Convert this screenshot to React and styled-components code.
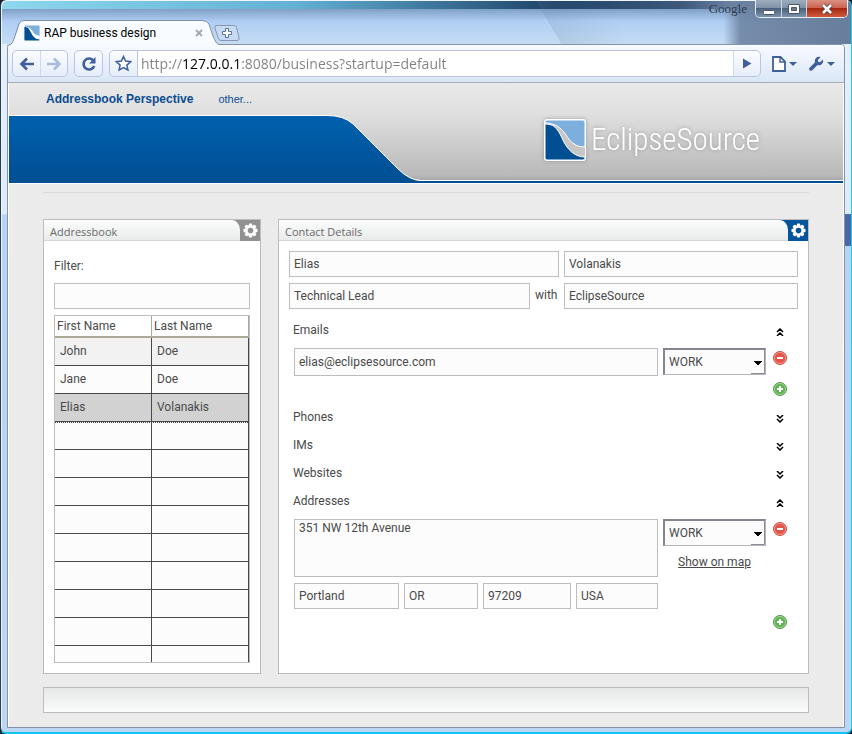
import React from "react";
import styled, { createGlobalStyle, css } from "styled-components";

const uiFont = '"Open Sans", "Noto Sans", sans-serif';
const formFont = 'Roboto, "Noto Sans", sans-serif';
const ink = "#4a4a4a";
const line = "#bdbdbd";
const navy = "#3f5f9c";

const GlobalStyle = createGlobalStyle`
  *, *::before, *::after { box-sizing: border-box; }
  body { margin: 0; background: #16202c; }
  button { padding: 0; border: 0; background: none; cursor: pointer; }
  svg { display: block; }
`;

/* ---------- window frame ---------- */

const WindowFrame = styled.div`
  display: flex;
  flex-direction: column;
  min-height: 100vh;
  padding: 0 6px 4px 6px;
  border-left: 1px solid #2a3c50;
  border-right: 1px solid #12d0f5;
  border-bottom: 2px solid #12c4ee;
  border-radius: 6px;
  box-shadow: inset 1px 1px 0 #eef6fc;
  background:
    linear-gradient(#0a1526, #0a1526) top / 100% 1px no-repeat,
    linear-gradient(60deg, transparent 64%, #5f7f9a2a 64%, transparent 72%) top / 100% 44px no-repeat,
    linear-gradient(90deg, transparent 85%, #6b81a0dd 87%, #667d9b 100%) top / 100% 44px no-repeat,
    linear-gradient(90deg, #8ed8ee, #62b0d3 35%, #1f4268 65%, #3d587a 80%, #6c83a2 86%) top / 100% 9px no-repeat,
    linear-gradient(#7fa0c4, #b0cdf4 35%, #c5dcf3) 0 9px / 100% 35px no-repeat,
    linear-gradient(#4d66a6, #4d66a6) right 214px / 6px 32px no-repeat,
    linear-gradient(#e8f2fc 0, #dceafa 214px, #b5d3f5 215px, #bcd7f4 100%);
`;

const TitleBar = styled.div`
  display: flex;
  align-items: flex-start;
  height: 44px;
`;

const TabStrip = styled.div`
  display: flex;
  align-items: flex-start;
  flex: 1;
  min-width: 0;
`;

const Tab = styled.div`
  position: relative;
  z-index: 1;
  display: flex;
  align-items: center;
  width: 212px;
  height: 26px;
  margin-top: 20px;
  padding: 0 14px 0 17px;
  color: #000;
  font: 12px/18px ${formFont};
`;

const TabShape = styled.svg`
  position: absolute;
  inset: 0;
  z-index: -1;
`;

const TabTitle = styled.span`
  flex: 1;
  margin-left: 4px;
  white-space: nowrap;
`;

const TabClose = styled.button`
  display: grid;
  place-items: center;
  width: 12px;
  height: 12px;
`;

const NewTab = styled.button`
  margin: 25px 0 0 -5px;
`;

const Brand = styled.span`
  margin-right: 8px;
  color: #2b3c50;
  font: 13px/18px "Liberation Serif", serif;
`;

const Controls = styled.div`
  display: flex;
  margin-right: -3px;
  border: 1px solid #e6eef7;
  border-top: 0;
  border-radius: 0 0 5px 5px;
  overflow: hidden;
`;

const ControlButton = styled.button`
  display: grid;
  place-items: center;
  width: ${({ $close }) => ($close ? 41 : 25)}px;
  height: 17px;
  border-left: ${({ $first }) => ($first ? 0 : "1px solid #c9d5e2")};
  background: ${({ $close }) =>
    $close
      ? "linear-gradient(#d99282, #cc6451 45%, #a72710 50%, #d05a3c)"
      : "linear-gradient(#9dadbf, #7f92a8 45%, #4c617b 50%, #7d93ad)"};
`;

const Chrome = styled.div`
  display: flex;
  flex-direction: column;
  flex: 1;
  border: 1px solid #8593a8;
  border-radius: 4px 4px 0 0;
`;

/* ---------- browser toolbar ---------- */

const Toolbar = styled.div`
  display: flex;
  align-items: center;
  gap: 6px;
  height: 38px;
  padding: 0 9px 0 4px;
  border-bottom: 1px solid #a9adb5;
  border-radius: 3px 3px 0 0;
  background: linear-gradient(#f8fbff, #dae6f6);
`;

const ToolGroup = styled.div`
  display: flex;
  height: 27px;
  border: 1px solid #b9c6df;
  border-radius: 5px;
  background: linear-gradient(#fafcff, #e6eefa);
  overflow: hidden;
`;

const ToolButton = styled.button`
  display: grid;
  place-items: center;
  width: 27px;
  height: 25px;
  color: ${navy};
  ${({ $divided }) => $divided && css`border-left: 1px solid #d0daeb;`}
`;

const AddressBar = styled(ToolGroup).attrs({ as: "form" })`
  flex: 1;
  min-width: 0;
`;

const AddressBox = styled.div`
  display: flex;
  flex: 1;
  min-width: 0;
  padding-left: 3px;
  border-left: 1px solid #b9c6df;
  background: #fff;
`;

/* The host part is tinted black, scheme and path stay grey. */
const Address = styled.input`
  flex: 1;
  min-width: 0;
  height: 25px;
  padding: 0;
  border: 0;
  outline: 0;
  background: linear-gradient(90deg, #808080 42px, #000 42px, #000 99px, #808080 99px);
  background-clip: text;
  -webkit-background-clip: text;
  color: transparent;
  caret-color: #000;
  font: 14px/24px ${uiFont};
`;

const MenuButton = styled.button`
  display: flex;
  align-items: center;
  gap: 3px;
  margin-left: 5px;
  color: ${navy};
`;

/* ---------- page ---------- */

const Page = styled.div`
  display: flex;
  flex-direction: column;
  flex: 1;
  padding-bottom: 14px;
  border: solid #fff;
  border-width: 0 1px;
  background: #ebebeb;
`;

const Header = styled.header`
  background:
    linear-gradient(transparent 97px, #fff 97px, #fff 98px, #004f92 98px, #004f92 100px, #fff 100px),
    linear-gradient(#e9e9e9, #e0e0e0 30px, #b9b9b9 92px, #a9a9a9 97px);
`;

const Nav = styled.nav`
  display: flex;
  align-items: center;
  gap: 25px;
  height: 32px;
  padding-left: 37px;
`;

const NavLink = styled.a`
  color: #0a4c90;
  font: ${({ $active }) => ($active ? "bold 12px" : "11px")}/16px "Liberation Sans", sans-serif;
  text-decoration: none;
`;

const Banner = styled.div`
  display: flex;
  align-items: flex-start;
  justify-content: space-between;
  height: 69px;
  padding-right: 83px;
`;

const Logo = styled.div`
  display: flex;
  align-items: center;
  gap: 5px;
  margin-top: 4px;
  filter: drop-shadow(0 0 2px #7779);
`;

const LogoText = styled.span`
  color: #fff;
  font: 300 31px/42px "Roboto Condensed", "Open Sans Condensed", Roboto, sans-serif;
`;

const Rule = styled.hr`
  align-self: stretch;
  height: 1px;
  margin: 8px 34px 26px;
  border: 0;
  background: #d9d9d9;
`;

const Workspace = styled.main`
  display: grid;
  grid-template-columns: 218px minmax(0, 1fr);
  gap: 17px;
  flex: 1;
  padding: 0 34px;
`;

const Panel = styled.section`
  display: flex;
  flex-direction: column;
  border: 1px solid ${line};
  background: #fff;
  color: ${ink};
  font: 12px/16px ${formFont};
`;

const accents = {
  gray: "#919191",
  blue: "#00549c",
};

const PanelHeader = styled.div`
  display: flex;
  justify-content: space-between;
  height: 21px;
  background: ${({ $accent }) => accents[$accent]};
  color: ${({ $accent }) => accents[$accent]};
`;

const PanelTitle = styled.h2`
  flex: 1;
  margin: 0;
  padding: 4px 6px 0;
  border-bottom: 1px solid #d6d6d6;
  border-top-right-radius: 8px 10px;
  background: linear-gradient(#fcfdfd, #e9eaea);
  color: #6a6a6a;
  font: 11px/16px ${uiFont};
`;

const PanelTool = styled.button`
  display: grid;
  place-items: center;
  width: 20px;
  height: 21px;
  color: inherit;
`;

const PanelBody = styled.div`
  display: flex;
  flex-direction: column;
  flex: 1;
  padding: 10px;
`;

const field = css`
  display: block;
  width: 100%;
  min-width: 0;
  margin: 0;
  padding: 0 4px;
  border: 1px solid ${line};
  border-radius: 0;
  outline: 0;
  background: #fcfcfc;
  color: ${ink};
  font: inherit;
`;

const Field = styled.input`
  ${field}
  height: ${({ $tall }) => ($tall ? 28 : 26)}px;
`;

const Area = styled.textarea`
  ${field}
  height: 58px;
  resize: none;
`;

const FilterLabel = styled.label`
  display: grid;
  gap: 9px;
  margin: 7px 0 6px;
`;

const TableBox = styled.div`
  flex: 1 1 0;
  min-height: 0;
  border: 1px solid ${line};
  background: #fcfcfc;
  overflow: hidden;
  contain: size;
`;

const Contacts = styled.table`
  width: 100%;
  border-spacing: 0;
  table-layout: fixed;
`;

const HeadCell = styled.th`
  height: 22px;
  padding: 0 2px;
  border: solid #aca899;
  border-width: 0 1px 2px 0;
  background: #fff;
  font-weight: 400;
  text-align: left;
`;

const Cell = styled.td`
  height: 28px;
  padding: 0 5px 2px;
  border: solid ${ink};
  border-width: 0 1px 1px 0;
`;

const Row = styled.tr`
  background: ${({ $tone }) => $tone || "#fcfcfc"};
  ${({ $selected }) => $selected && css`outline: 1px dotted #444;`}
`;

const Identity = styled.div`
  display: grid;
  grid-template-columns: 270fr 234fr;
  gap: 6px 5px;
  margin-bottom: 7px;
`;

const Employment = styled.div`
  display: flex;
  gap: 5px;
`;

const With = styled.span`
  flex: none;
  width: 24px;
  padding-top: 4px;
`;

const SectionHead = styled.div`
  display: flex;
  align-items: center;
  justify-content: space-between;
  height: 28px;
  padding: 0 14px 0 4px;
`;

const SectionTitle = styled.h3`
  margin: 0;
  font: inherit;
`;

const Toggle = styled.button`
  padding-top: 4px;
`;

const Entry = styled.div`
  display: grid;
  grid-template-columns: minmax(0, 1fr) 103px 16px;
  column-gap: 5px;
  align-items: start;
  margin-top: 4px;
  padding: 0 11px 0 5px;
`;

const EntryColumn = styled.div`
  display: grid;
  gap: 6px;
`;

const CityRow = styled.div`
  display: grid;
  grid-template-columns: 105fr 74fr 88fr 82fr;
  gap: 5px;
`;

const RoundButton = styled.button`
  margin: 3px 0 0 2px;
`;

const AddRow = styled.div`
  display: flex;
  justify-content: flex-end;
  padding: 6px 11px 7px 0;
`;

const SelectBox = styled.div`
  display: grid;
  grid-template-columns: 1fr 14px;
  align-items: center;
  height: 27px;
  border: 1px solid #b4b4bb;
  border-top: 2px solid #85858f;
  border-left: 2px solid #85858f;
  background: #fcfcfc;

  svg { grid-area: 1 / 2; pointer-events: none; }
`;

const Select = styled.select`
  grid-area: 1 / 1 / 2 / 3;
  appearance: none;
  width: 100%;
  height: 24px;
  padding: 0 4px;
  border: 0;
  outline: 0;
  background: none;
  color: ${ink};
  font: inherit;
`;

const MapLink = styled.a`
  justify-self: center;
  margin-top: 2px;
  color: ${ink};
  text-decoration: underline;
`;

const StatusBar = styled.footer`
  height: 26px;
  margin: 13px 34px 0;
  border: 1px solid ${line};
  background: linear-gradient(#e6e7e7, #fafbfb);
`;

/* ---------- drawings ---------- */

function SourceMark({ size, outlined }) {
  return (
    <svg width={size} height={size} viewBox="0 0 42 42" aria-hidden="true">
      {outlined && <rect width="42" height="42" rx="3" fill="#fff" />}
      <rect x="1" y="1" width="40" height="40" rx="2" fill={outlined ? "#c6c6c6" : "#fff"} />
      <path
        d="M1 4V3q0-2 2-2h36q2 0 2 2v25C32 28 27 24 22 16 17 8 10 4 1 4z"
        fill="#7cafdb"
        stroke="#fff"
        strokeWidth={outlined ? 1 : 0}
      />
      <path
        d="M1 5c8 0 12 3 17 14 5 12 13 19 23 19v1q0 2-2 2H3q-2 0-2-2z"
        fill="#004f92"
        stroke="#fff"
        strokeWidth={outlined ? 1 : 0}
      />
    </svg>
  );
}

function Gear() {
  return (
    <svg width="15" height="15" viewBox="0 0 16 16" aria-hidden="true">
      <g fill="#fff">
        {[0, 45, 90, 135].map((a) => (
          <rect key={a} x="6.2" y="0.5" width="3.6" height="15" rx="1" transform={`rotate(${a} 8 8)`} />
        ))}
      </g>
      <circle cx="8" cy="8" r="4.6" fill="none" stroke="#fff" strokeWidth="2.4" />
      <circle cx="8" cy="8" r="3" fill="currentColor" />
    </svg>
  );
}

function Chevrons({ up }) {
  return (
    <svg width="8" height="8" viewBox="0 0 8 8" aria-hidden="true">
      <path
        d={up ? "M1 4l3-3 3 3M1 8l3-3 3 3" : "M1 0l3 3 3-3M1 4l3 3 3-3"}
        fill="none"
        stroke="#000"
        strokeWidth="1.5"
      />
    </svg>
  );
}

function RoundIcon({ plus }) {
  const [dark, mid, light] = plus ? ["#4f9a45", "#62b356", "#a9dc9d"] : ["#cf4d45", "#e2554b", "#f6a69c"];
  return (
    <svg width="14" height="14" viewBox="0 0 14 14" aria-hidden="true">
      <circle cx="7" cy="7" r="6.5" fill={mid} stroke={dark} />
      <circle cx="7" cy="7" r="5.6" fill="none" stroke={light} strokeWidth=".8" />
      <path d={plus ? "M4 7h6M7 4v6" : "M4 7h6"} stroke="#fff" strokeWidth="2" />
    </svg>
  );
}

const Caret = () => (
  <svg width="8" height="4" viewBox="0 0 8 4" aria-hidden="true">
    <path d="M0 0h8L4 4z" fill="currentColor" />
  </svg>
);

const Arrow = ({ flip }) => (
  <svg width="16" height="16" viewBox="0 0 16 16" aria-hidden="true">
    <path
      d={flip ? "M1 8h12M8 2.5 13.5 8 8 13.5" : "M15 8H3M8 2.5 2.5 8 8 13.5"}
      fill="none"
      stroke={flip ? "#a9bce0" : navy}
      strokeWidth="2.6"
    />
  </svg>
);

/* ---------- parts ---------- */

function KindSelect({ label }) {
  return (
    <SelectBox>
      <Select aria-label={label} defaultValue="WORK">
        <option>WORK</option>
        <option>HOME</option>
      </Select>
      <svg width="14" height="24" viewBox="0 0 14 24" aria-hidden="true">
        <path d="M3 11h8v1h-1v1H9v1H8v1H6v-1H5v-1H4v-1H3z" fill="#000" />
        <path d="M0 23.500h13.500V0" fill="none" stroke="#8c8c95" />
      </svg>
    </SelectBox>
  );
}

function SectionHeader({ title, open }) {
  return (
    <SectionHead>
      <SectionTitle>{title}</SectionTitle>
      <Toggle aria-label={`Toggle ${title}`} aria-expanded={!!open}>
        <Chevrons up={open} />
      </Toggle>
    </SectionHead>
  );
}

function Titled({ title, accent, children }) {
  return (
    <Panel>
      <PanelHeader $accent={accent}>
        <PanelTitle>{title}</PanelTitle>
        <PanelTool aria-label={`${title} settings`}>
          <Gear />
        </PanelTool>
      </PanelHeader>
      <PanelBody>{children}</PanelBody>
    </Panel>
  );
}

const people = [
  { first: "John", last: "Doe", tone: "#f2f2f2" },
  { first: "Jane", last: "Doe" },
  { first: "Elias", last: "Volanakis", tone: "#d2d2d2", selected: true },
  ...Array.from({ length: 9 }, () => ({ first: "", last: "" })),
];

export default function App() {
  return (
    <WindowFrame>
      <GlobalStyle />
      <TitleBar>
        <TabStrip>
          <Tab>
            <TabShape width="212" height="26" viewBox="0 0 212 26" aria-hidden="true">
              <path
                d="M0 26C5 25 6 22 8 16L12 4Q13 .5 17 .5H195Q200 .5 202 4L206 16Q209 24 212 24.5V26z"
                fill="#f8fbff"
              />
              <path
                d="M0 25.500C5 25 6 22 8 16L12 4Q13 .5 17 .5H195Q200 .5 202 4L206 16Q209 24 212 24.500"
                fill="none"
                stroke="#7e8ea6"
              />
            </TabShape>
            <SourceMark size={16} />
            <TabTitle>RAP business design</TabTitle>
            <TabClose aria-label="Close tab">
              <svg width="8" height="8" viewBox="0 0 8 8" aria-hidden="true">
                <path d="M1 1l6 6M7 1L1 7" stroke="#a3a7ad" strokeWidth="1.800" />
              </svg>
            </TabClose>
          </Tab>
          <NewTab aria-label="New tab">
            <svg width="26" height="16" viewBox="0 0 26 16" aria-hidden="true">
              <path
                d="M3 .5h17q2 0 2.500 2L25 12q1 3.500-2 3.500H7q-2 0-3-3L1 3Q0 .5 3 .5z"
                fill="#c6dbf2"
                stroke="#8797ae"
              />
              <path d="M11.500 3.500h3v3h3v3h-3v3h-3v-3h-3v-3h3z" fill="#fff" stroke="#5b73a0" />
            </svg>
          </NewTab>
        </TabStrip>
        <Brand>Google</Brand>
        <Controls>
          <ControlButton $first aria-label="Minimize">
            <svg width="12" height="14" viewBox="0 0 12 14" aria-hidden="true">
              <rect x=".5" y="8.500" width="11" height="4" rx="1" fill="#fff" stroke="#4c586a" />
            </svg>
          </ControlButton>
          <ControlButton aria-label="Maximize">
            <svg width="12" height="12" viewBox="0 0 12 12" aria-hidden="true">
              <path d="M.5 1.500h11v9H.5z" fill="#fff" stroke="#4c586a" />
              <path d="M3.500 4.500h5v3h-5z" fill="#667a92" stroke="#4c586a" />
            </svg>
          </ControlButton>
          <ControlButton $close aria-label="Close">
            <svg width="12" height="12" viewBox="0 0 12 12" aria-hidden="true">
              <path d="M2 2l8 8M10 2l-8 8" stroke="#5b3a3c" strokeWidth="4.500" />
              <path d="M2 2l8 8M10 2l-8 8" stroke="#fff" strokeWidth="2.600" />
            </svg>
          </ControlButton>
        </Controls>
      </TitleBar>

      <Chrome>
        <Toolbar>
          <ToolGroup>
            <ToolButton aria-label="Back">
              <Arrow />
            </ToolButton>
            <ToolButton $divided aria-label="Forward">
              <Arrow flip />
            </ToolButton>
          </ToolGroup>
          <ToolGroup>
            <ToolButton aria-label="Reload">
              <svg width="16" height="16" viewBox="0 0 16 16" aria-hidden="true">
                <path d="M12.500 4.800A5.500 5.500 0 1 0 13.200 10" fill="none" stroke={navy} strokeWidth="2.600" />
                <path d="M14.500 1v6.500H8z" fill={navy} />
              </svg>
            </ToolButton>
          </ToolGroup>
          <AddressBar onSubmit={(e) => e.preventDefault()}>
            <ToolButton type="button" aria-label="Bookmark">
              <svg width="17" height="17" viewBox="0 0 17 17" aria-hidden="true">
                <path
                  d="M8.500 1.500l2.100 4.600 5 .6-3.700 3.400 1 4.900-4.400-2.500L4.100 15l1-4.900L1.400 6.700l5-.6z"
                  fill="#fff"
                  stroke={navy}
                  strokeWidth="1.500"
                />
              </svg>
            </ToolButton>
            <AddressBox>
              <Address
                type="text"
                aria-label="Address"
                spellCheck={false}
                defaultValue="http://127.0.0.1:8080/business?startup=default"
              />
            </AddressBox>
            <ToolButton $divided aria-label="Go">
              <svg width="10" height="11" viewBox="0 0 10 11" aria-hidden="true">
                <path d="M1 .5L9.500 5.500 1 10.500z" fill={navy} />
              </svg>
            </ToolButton>
          </AddressBar>
          <MenuButton aria-label="Page menu">
            <svg width="14" height="16" viewBox="0 0 14 16" aria-hidden="true">
              <path d="M1 1h7.500L13 5.500V15H1z" fill="#fff" stroke={navy} strokeWidth="1.800" />
              <path d="M8 1v5h5" fill="none" stroke={navy} strokeWidth="1.400" />
            </svg>
            <Caret />
          </MenuButton>
          <MenuButton aria-label="Tools menu">
            <svg width="16" height="16" viewBox="0 0 16 16" aria-hidden="true">
              <path
                d="M12.500 1.200L9.800 3.900l.4 1.900 1.900.4 2.700-2.700c1 2-.1 5-2.700 5.700-1 .3-1.900.1-2.600-.1L4.300 14.300c-1.800 1.500-4.200-.8-2.700-2.600L6.900 6.500C6.200 3 9.200-.2 12.500 1.200z"
                fill={navy}
              />
            </svg>
            <Caret />
          </MenuButton>
        </Toolbar>

        <Page>
          <Header>
            <Nav>
              <NavLink href="#addressbook" $active>
                Addressbook Perspective
              </NavLink>
              <NavLink href="#other">other...</NavLink>
            </Nav>
            <Banner>
              <svg width="412" height="68" viewBox="0 0 412 68" aria-hidden="true">
                <defs>
                  <linearGradient id="wave" x1="0" y1="0" x2="0" y2="1">
                    <stop offset="0" stopColor="#0060ae" />
                    <stop offset="1" stopColor="#004f92" />
                  </linearGradient>
                </defs>
                <path
                  d="M0 .5H318Q335 .5 344 9L389 54Q401 66 412 66V68H0z"
                  fill="url(#wave)"
                />
                <path
                  d="M0 .5H318Q335 .5 344 9L389 54Q401 65.500 412 65.500"
                  fill="none"
                  stroke="#fff"
                />
              </svg>
              <Logo>
                <SourceMark size={42} outlined />
                <LogoText>EclipseSource</LogoText>
              </Logo>
            </Banner>
          </Header>
          <Rule />
          <Workspace>
            <Titled title="Addressbook" accent="gray">
              <FilterLabel>
                Filter:
                <Field type="text" />
              </FilterLabel>
              <TableBox>
                <Contacts>
                  <thead>
                    <tr>
                      <HeadCell>First Name</HeadCell>
                      <HeadCell>Last Name</HeadCell>
                    </tr>
                  </thead>
                  <tbody>
                    {people.map((p, i) => (
                      <Row key={i} $tone={p.tone} $selected={p.selected}>
                        <Cell>{p.first}</Cell>
                        <Cell>{p.last}</Cell>
                      </Row>
                    ))}
                  </tbody>
                </Contacts>
              </TableBox>
            </Titled>

            <Titled title="Contact Details" accent="blue">
              <Identity>
                <Field aria-label="First name" defaultValue="Elias" />
                <Field aria-label="Last name" defaultValue="Volanakis" />
                <Employment>
                  <Field aria-label="Job title" defaultValue="Technical Lead" />
                  <With>with</With>
                </Employment>
                <Field aria-label="Company" defaultValue="EclipseSource" />
              </Identity>

              <SectionHeader title="Emails" open />
              <Entry>
                <Field $tall type="email" aria-label="Email" defaultValue="elias@eclipsesource.com" />
                <KindSelect label="Email type" />
                <RoundButton aria-label="Remove email">
                  <RoundIcon />
                </RoundButton>
              </Entry>
              <AddRow>
                <button aria-label="Add email">
                  <RoundIcon plus />
                </button>
              </AddRow>

              <SectionHeader title="Phones" />
              <SectionHeader title="IMs" />
              <SectionHeader title="Websites" />
              <SectionHeader title="Addresses" open />
              <Entry>
                <EntryColumn>
                  <Area aria-label="Street" defaultValue="351 NW 12th Avenue" />
                  <CityRow>
                    <Field aria-label="City" defaultValue="Portland" />
                    <Field aria-label="State" defaultValue="OR" />
                    <Field aria-label="Postal code" defaultValue="97209" />
                    <Field aria-label="Country" defaultValue="USA" />
                  </CityRow>
                </EntryColumn>
                <EntryColumn>
                  <KindSelect label="Address type" />
                  <MapLink href="#map">Show on map</MapLink>
                </EntryColumn>
                <RoundButton aria-label="Remove address">
                  <RoundIcon />
                </RoundButton>
              </Entry>
              <AddRow>
                <button aria-label="Add address">
                  <RoundIcon plus />
                </button>
              </AddRow>
            </Titled>
          </Workspace>
          <StatusBar />
        </Page>
      </Chrome>
    </WindowFrame>
  );
}
